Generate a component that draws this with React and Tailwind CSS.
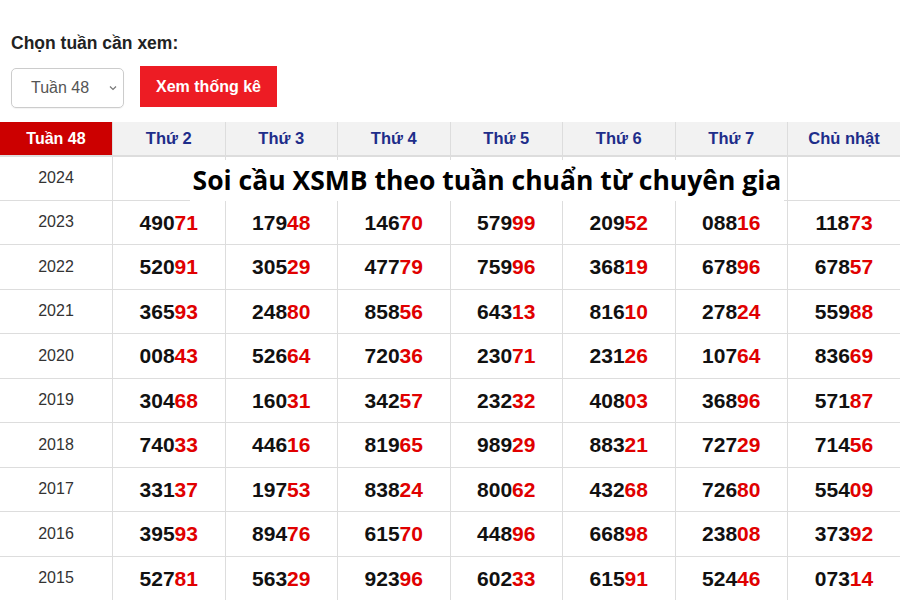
import React from "react";

const days = ["Thứ 2", "Thứ 3", "Thứ 4", "Thứ 5", "Thứ 6", "Thứ 7", "Chủ nhật"];

const rows = [
  ["2023", ["49071", "17948", "14670", "57999", "20952", "08816", "11873"]],
  ["2022", ["52091", "30529", "47779", "75996", "36819", "67896", "67857"]],
  ["2021", ["36593", "24880", "85856", "64313", "81610", "27824", "55988"]],
  ["2020", ["00843", "52664", "72036", "23071", "23126", "10764", "83669"]],
  ["2019", ["30468", "16031", "34257", "23232", "40803", "36896", "57187"]],
  ["2018", ["74033", "44616", "81965", "98929", "88321", "72729", "71456"]],
  ["2017", ["33137", "19753", "83824", "80062", "43268", "72680", "55409"]],
  ["2016", ["39593", "89476", "61570", "44896", "66898", "23808", "37392"]],
  ["2015", ["52781", "56329", "92396", "60233", "61591", "52446", "07314"]],
];

function Num({ value }) {
  return (
    <span className="font-bold text-[21px] text-[#111]">
      {value.slice(0, 3)}
      <span className="text-[#e00000]">{value.slice(3)}</span>
    </span>
  );
}

export default function App() {
  return (
    <div
      className="w-[900px] h-[600px] overflow-hidden bg-white"
      style={{ fontFamily: '"Liberation Sans", Arial, sans-serif' }}
    >
      {/* week picker */}
      <div className="px-[11px] pt-[33px]">
        <div className="text-[17.5px] font-bold text-[#222] leading-[20px]">Chọn tuần cần xem:</div>
        <div className="flex items-start gap-4 mt-[13px]">
          <div className="mt-[2px] w-[113px] h-[40px] border border-[#ccc] rounded-[5px] flex items-center justify-between pl-[19px] pr-[4px] shadow-[0_1px_1px_rgba(0,0,0,0.05)]">
            <span className="text-[16px] text-[#555]">Tuần 48</span>
            <svg width="12" height="12" viewBox="0 0 12 12" fill="none" stroke="#777" strokeWidth="1.2">
              <path d="M3 4.5l3 3 3-3" />
            </svg>
          </div>
          <div className="h-[41px] w-[137px] bg-[#ed1c24] flex items-center justify-center text-white font-bold text-[16px]">
            Xem thống kê
          </div>
        </div>
      </div>

      {/* table */}
      <div className="relative mt-[14px]">
        <table className="w-[900px] table-fixed border-collapse">
          <thead>
            <tr className="h-[34px] bg-[#f2f2f2]">
              <th className="bg-[#cc0000] text-white text-[16px] font-bold border-b-2 border-[#ddd] border-r border-r-[#ddd]">
                Tuần 48
              </th>
              {days.map((d) => (
                <th
                  key={d}
                  className="text-[#1e2d8a] text-[16.5px] font-bold border-x border-[#ddd] border-b-2 border-b-[#ddd] last:border-r-0"
                >
                  {d}
                </th>
              ))}
            </tr>
          </thead>
          <tbody>
            <tr className="h-[44px]">
              <td className="text-center text-[16px] text-[#333] border border-[#ddd] border-l-0">2024</td>
              {days.map((d) => (
                <td key={d} className="border border-[#ddd] last:border-r-0"></td>
              ))}
            </tr>
            {rows.map(([year, nums]) => (
              <tr key={year} className="h-[44.5px]">
                <td className="text-center text-[16px] text-[#333] border border-[#ddd] border-l-0">{year}</td>
                {nums.map((n, i) => (
                  <td key={i} className="text-center border border-[#ddd] last:border-r-0">
                    <Num value={n} />
                  </td>
                ))}
              </tr>
            ))}
          </tbody>
        </table>

        {/* title banner over the 2024 row */}
        <div
          className="absolute left-[190px] top-[38px] w-[594px] h-[41px] bg-white flex items-center justify-center text-[26.5px] font-bold text-black"
          style={{ fontFamily: '"Open Sans", "Noto Sans", sans-serif' }}
        >
          Soi cầu XSMB theo tuần chuẩn từ chuyên gia
        </div>
      </div>
    </div>
  );
}
